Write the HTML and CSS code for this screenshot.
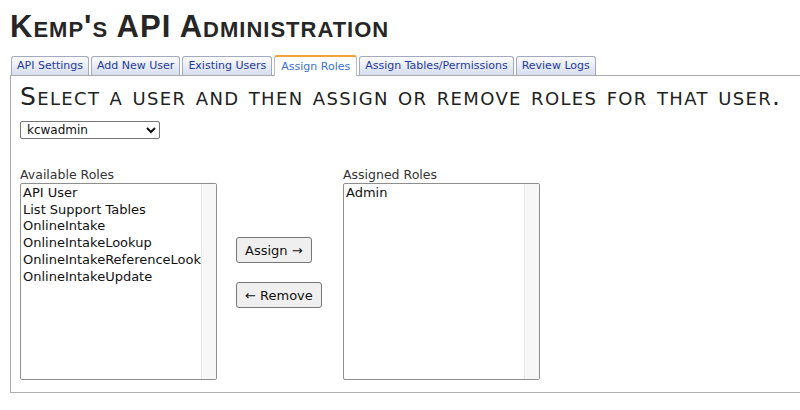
FILE: index.html
```html
<!DOCTYPE html>
<html>
<head>
<meta charset="utf-8">
<link rel="stylesheet" href="styles.css">
</head>
<body>
<div class="page">
  <h1 class="title">Kemp's API Administration</h1>
  <ul class="tabs">
    <li class="tab">API Settings</li>
    <li class="tab">Add New User</li>
    <li class="tab">Existing Users</li>
    <li class="tab active">Assign Roles</li>
    <li class="tab">Assign Tables/Permissions</li>
    <li class="tab">Review Logs</li>
  </ul>
  <div class="panel">
    <h2 class="heading">Select a user and then assign or remove roles for that user.</h2>
    <select class="user-select"><option>kcwadmin</option></select>
    <div class="roles">
      <div class="role-col">
        <div class="label">Available Roles</div>
        <div class="listbox">
          <div class="items">
            <div>API User</div>
            <div>List Support Tables</div>
            <div>OnlineIntake</div>
            <div>OnlineIntakeLookup</div>
            <div>OnlineIntakeReferenceLookup</div>
            <div>OnlineIntakeUpdate</div>
          </div>
          <div class="track"></div>
        </div>
      </div>
      <div class="actions">
        <button class="btn">Assign →</button>
        <button class="btn">← Remove</button>
      </div>
      <div class="role-col">
        <div class="label">Assigned Roles</div>
        <div class="listbox">
          <div class="items">
            <div>Admin</div>
          </div>
          <div class="track"></div>
        </div>
      </div>
    </div>
  </div>
</div>
</body>
</html>
```
FILE: styles.css
```css
html, body {
  margin: 0;
  padding: 0;
  background: #fff;
  overflow: hidden;
}
.page {
  padding: 10px 0 0 10px;
  font-family: "DejaVu Sans", Verdana, sans-serif;
  color: #222;
}
.title {
  margin: 0;
  font-family: "Liberation Sans", Arial, sans-serif;
  font-variant: small-caps;
  font-weight: bold;
  font-size: 31px;
  line-height: 34px;
  color: #262626;
  letter-spacing: 1px;
}
.tabs {
  list-style: none;
  margin: 11px 0 0 1px;
  padding: 0;
  display: flex;
  align-items: flex-end;
  gap: 2px;
  height: 20px;
}
.tab {
  font-size: 11px;
  line-height: 18px;
  padding: 0 5px;
  color: #1f3a9c;
  border: 1px solid #a3aabb;
  border-bottom: none;
  border-radius: 3px 3px 0 0;
  background: linear-gradient(#fbfcfe, #d6ddef);
  height: 18px;
}
.tab.active {
  background: #fff;
  color: #3a6fd6;
  border-color: #b8bcc6;
  border-top: 2px solid #f2a33a;
  height: 19px;
  line-height: 19px;
  padding: 0 6px;
  position: relative;
  top: 1px;
}
.panel {
  border-left: 1px solid #aaa;
  border-top: 1px solid #aaa;
  border-bottom: 1px solid #b0b0b0;
  padding: 7px 0 11px 9px;
  height: 298px;
}
.heading {
  margin: 0;
  font-weight: normal;
  font-variant: small-caps;
  font-size: 25px;
  line-height: 28px;
  color: #222;
  letter-spacing: 1.35px;
  white-space: nowrap;
}
.user-select {
  margin-top: 10px;
  width: 140px;
  height: 18px;
  font-family: "DejaVu Sans", Verdana, sans-serif;
  font-size: 12px;
  border: 1px solid #767676;
  border-radius: 2px;
  padding: 0 2px;
  background: #fff;
  color: #111;
  display: block;
}
.roles {
  display: flex;
  margin-top: 27px;
}
.label {
  font-size: 12.5px;
  line-height: 17px;
  color: #333;
}
.listbox {
  display: flex;
  width: 195px;
  height: 195px;
  border: 1px solid #8e8e8e;
  border-radius: 2px;
  background: #fff;
  overflow: hidden;
}
.items {
  flex: 1;
  overflow: hidden;
  white-space: nowrap;
  font-size: 13px;
  line-height: 16.7px;
  color: #111;
  padding: 1px 0 0 2px;
}
.track {
  width: 14px;
  background: #f7f7f7;
  border-left: 1px solid #e8e8e8;
}
.actions {
  width: 126px;
  display: flex;
  flex-direction: column;
  align-items: flex-start;
  padding: 71px 0 0 19px;
  box-sizing: border-box;
  gap: 19px;
}
.btn {
  font-family: "DejaVu Sans", Verdana, sans-serif;
  font-size: 13px;
  height: 26px;
  padding: 0 8px;
  background: #efefef;
  border: 1px solid #767676;
  border-radius: 3px;
  color: #111;
}
```
